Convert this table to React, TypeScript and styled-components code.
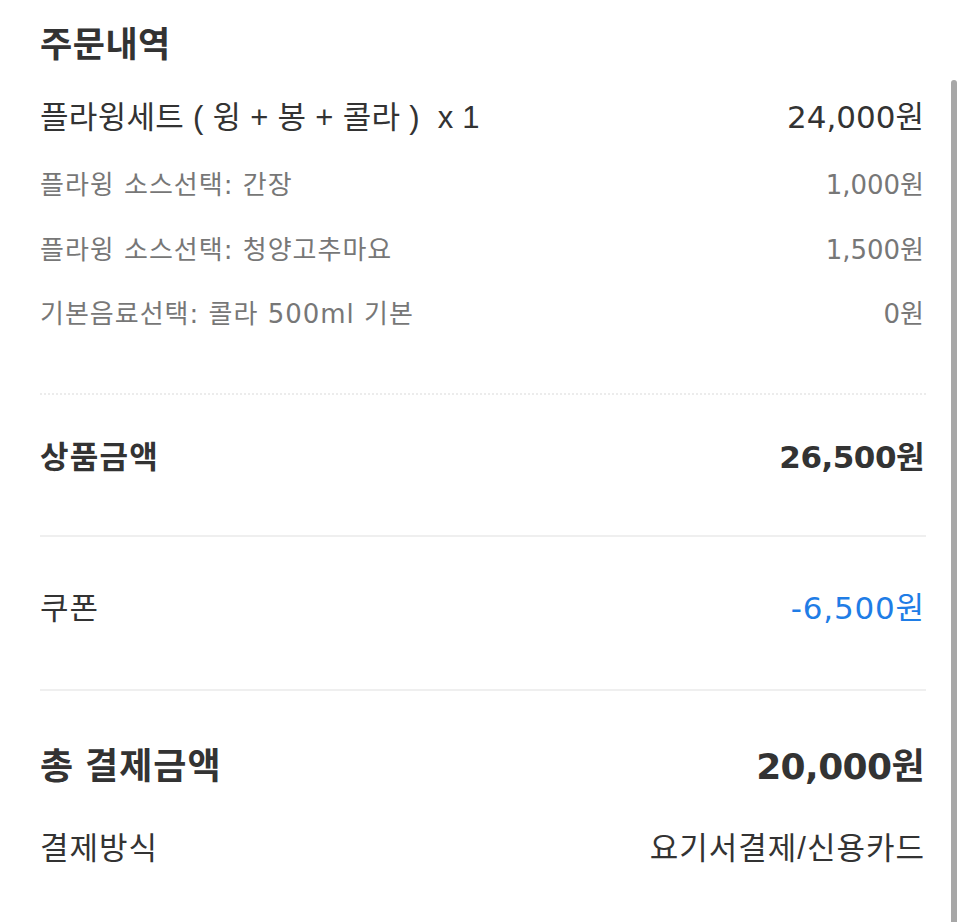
import React from "react";
import styled, { createGlobalStyle } from "styled-components";

const Global = createGlobalStyle`
  html, body { margin: 0; padding: 0; background: #ffffff; }
  body { font-family: "Liberation Sans", "Noto Sans CJK KR", sans-serif; color: #333333; }
`;

const Page = styled.div`
  position: relative;
  width: 966px;
  height: 922px;
  overflow: hidden;
  background: #ffffff;
`;

const Content = styled.div`
  display: flex;
  flex-direction: column;
  padding: 0 42px 0 40px;
`;

const Title = styled.h1`
  margin: 0;
  height: 80px;
  display: flex;
  align-items: center;
  padding-top: 2px;
  box-sizing: border-box;
  font-family: "Liberation Sans", "Noto Sans CJK KR", sans-serif;
  font-size: 35px;
  font-weight: 700;
  color: #333333;
  letter-spacing: 0.5px;
`;

const Section = styled.div<{ $top: number; $bottom: number }>`
  display: flex;
  flex-direction: column;
  padding-top: ${(p) => p.$top}px;
  padding-bottom: ${(p) => p.$bottom}px;
`;

const Row = styled.div<{ $h: number }>`
  display: flex;
  justify-content: space-between;
  align-items: center;
  height: ${(p) => p.$h}px;
`;

type Tone = "item" | "main" | "sub" | "strong" | "total" | "blue";

const toneStyles: Record<Tone, { size: number; weight: number; color: string; ls: number }> = {
  item: { size: 31, weight: 400, color: "#333333", ls: 0.3 },
  main: { size: 31, weight: 400, color: "#333333", ls: 1 },
  sub: { size: 26, weight: 400, color: "#777777", ls: 1 },
  strong: { size: 31, weight: 700, color: "#333333", ls: 1.2 },
  total: { size: 36, weight: 700, color: "#333333", ls: 1 },
  blue: { size: 31, weight: 400, color: "#1f7de6", ls: 0 },
};

const Text = styled.span<{ $tone: Tone; $ls?: number; $wide?: boolean }>`
  font-family: ${(p) =>
    p.$wide
      ? `"DejaVu Sans", "Noto Sans CJK KR", sans-serif`
      : `"Liberation Sans", "Noto Sans CJK KR", sans-serif`};
  font-size: ${(p) => toneStyles[p.$tone].size}px;
  font-weight: ${(p) => toneStyles[p.$tone].weight};
  color: ${(p) => toneStyles[p.$tone].color};
  letter-spacing: ${(p) => p.$ls ?? toneStyles[p.$tone].ls}px;
  line-height: 1.2;
  padding-top: 6px;
  white-space: pre;
`;

const Amount = styled(Text)`
  margin-right: -${(p) => p.$ls ?? toneStyles[p.$tone].ls}px;
`;

const Divider = styled.div<{ $dotted?: boolean }>`
  height: 0;
  border-top: ${(p) => (p.$dotted ? "2px dotted #ececec" : "2px solid #efefef")};
  margin-right: -2px;
`;

const ScrollThumb = styled.div`
  position: absolute;
  right: 9px;
  top: 80px;
  bottom: -10px;
  width: 6px;
  border-radius: 3px;
  background: #a7a7a7;
`;

const options = [
  { label: "플라윙 소스선택: 간장", price: "1,000원", h: 66 },
  { label: "플라윙 소스선택: 청양고추마요", price: "1,500원", h: 64 },
  { label: "기본음료선택: 콜라 500ml 기본", price: "0원", h: 64 },
];

export default function App() {
  return (
    <Page>
      <Global />
      <Content>
        <Title>주문내역</Title>
        <Section $top={0} $bottom={49}>
          <Row $h={70}>
            <Text $tone="item">{"플라윙세트 ( 윙 + 봉 + 콜라 )  x 1"}</Text>
            <Amount $tone="main" $wide $ls={0}>24,000원</Amount>
          </Row>
          {options.map((o) => (
            <Row $h={o.h} key={o.label}>
              <Text $tone="sub" $wide>{o.label}</Text>
              <Amount $tone="sub" $wide $ls={0}>{o.price}</Amount>
            </Row>
          ))}
        </Section>
        <Divider $dotted />
        <Section $top={30} $bottom={50}>
          <Row $h={60}>
            <Text $tone="strong">상품금액</Text>
            <Amount $tone="strong" $wide $ls={-0.5}>26,500원</Amount>
          </Row>
        </Section>
        <Divider />
        <Section $top={39} $bottom={53}>
          <Row $h={60}>
            <Text $tone="main">쿠폰</Text>
            <Amount $tone="blue" $wide $ls={0.8}>-6,500원</Amount>
          </Row>
        </Section>
        <Divider />
        <Section $top={43} $bottom={40}>
          <Row $h={60}>
            <Text $tone="total">총 결제금액</Text>
            <Amount $tone="total" $wide $ls={-0.6}>20,000원</Amount>
          </Row>
          <Row $h={22} />
          <Row $h={60}>
            <Text $tone="main">결제방식</Text>
            <Amount $tone="main">요기서결제/신용카드</Amount>
          </Row>
        </Section>
      </Content>
      <ScrollThumb />
    </Page>
  );
}
